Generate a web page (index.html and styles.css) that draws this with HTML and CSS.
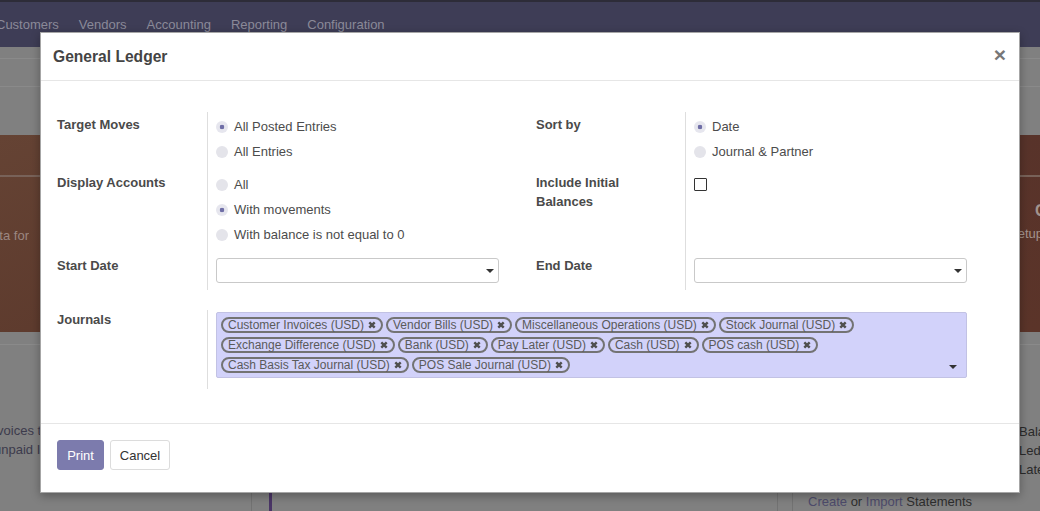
FILE: index.html
```html
<!DOCTYPE html>
<html lang="en">
<head>
<meta charset="utf-8">
<title>General Ledger</title>
<link rel="stylesheet" href="styles.css">
</head>
<body>
<div class="app">
  <nav class="topnav">
    <span class="nav-item first">Customers</span>
    <span class="nav-item">Vendors</span>
    <span class="nav-item">Accounting</span>
    <span class="nav-item">Reporting</span>
    <span class="nav-item">Configuration</span>
  </nav>
  <div class="cpanel">
    <div class="cp-row1"></div>
    <div class="cp-row2"></div>
  </div>
  <div class="banner">
    <div class="banner-rule"></div>
    <div class="banner-body">
      <div class="banner-left"><span class="banner-sub">Import data for</span></div>
      <div class="banner-right">
        <div class="banner-title">Company Data</div>
        <div class="banner-sub2">Setup your company</div>
      </div>
    </div>
  </div>
  <div class="dash">
    <div class="dash-top"></div>
    <div class="dash-cols">
      <div class="col col-a">
        <div class="clip">
          <div class="dim-text l1">invoices to customers</div>
          <div class="dim-text l2">unpaid Invoices</div>
        </div>
      </div>
      <div class="col col-b"><div class="purple-bar"></div></div>
      <div class="col col-c"></div>
      <div class="col col-d">
        <div class="stmt"><span class="lnk">Create</span> or <span class="lnk">Import</span> Statements</div>
      </div>
      <div class="col col-e">
        <div>Balance Sheet</div>
        <div>Ledger</div>
        <div>Late Payments</div>
      </div>
    </div>
  </div>
</div>

<div class="modal">
  <div class="modal-header">
    <h4 class="modal-title">General Ledger</h4>
    <span class="modal-close">&#215;</span>
  </div>
  <div class="modal-body">
    <div class="form-grid">
      <div class="f-label">Target Moves</div>
      <div class="f-value">
        <div class="radio"><span class="rdot checked"></span><span>All Posted Entries</span></div>
        <div class="radio"><span class="rdot"></span><span>All Entries</span></div>
      </div>
      <div class="f-label">Sort by</div>
      <div class="f-value right">
        <div class="radio"><span class="rdot checked"></span><span>Date</span></div>
        <div class="radio"><span class="rdot"></span><span>Journal &amp; Partner</span></div>
      </div>

      <div class="f-label">Display Accounts</div>
      <div class="f-value">
        <div class="radio"><span class="rdot"></span><span>All</span></div>
        <div class="radio"><span class="rdot checked"></span><span>With movements</span></div>
        <div class="radio"><span class="rdot"></span><span>With balance is not equal to 0</span></div>
      </div>
      <div class="f-label">Include Initial Balances</div>
      <div class="f-value right">
        <span class="checkbox"></span>
      </div>

      <div class="f-label">Start Date</div>
      <div class="f-value">
        <div class="select"><span class="caret"></span></div>
      </div>
      <div class="f-label">End Date</div>
      <div class="f-value right">
        <div class="select"><span class="caret"></span></div>
      </div>
    </div>

    <div class="journals-grid">
      <div class="f-label j-label">Journals</div>
      <div class="f-value j-value">
        <div class="tagbox">
          <span class="tag">Customer Invoices (USD)<svg class="x" viewBox="0 0 8 8"><path d="M1.3 1.3L6.7 6.7M6.7 1.3L1.3 6.7"/></svg></span>
          <span class="tag">Vendor Bills (USD)<svg class="x" viewBox="0 0 8 8"><path d="M1.3 1.3L6.7 6.7M6.7 1.3L1.3 6.7"/></svg></span>
          <span class="tag">Miscellaneous Operations (USD)<svg class="x" viewBox="0 0 8 8"><path d="M1.3 1.3L6.7 6.7M6.7 1.3L1.3 6.7"/></svg></span>
          <span class="tag">Stock Journal (USD)<svg class="x" viewBox="0 0 8 8"><path d="M1.3 1.3L6.7 6.7M6.7 1.3L1.3 6.7"/></svg></span>
          <span class="tag">Exchange Difference (USD)<svg class="x" viewBox="0 0 8 8"><path d="M1.3 1.3L6.7 6.7M6.7 1.3L1.3 6.7"/></svg></span>
          <span class="tag">Bank (USD)<svg class="x" viewBox="0 0 8 8"><path d="M1.3 1.3L6.7 6.7M6.7 1.3L1.3 6.7"/></svg></span>
          <span class="tag">Pay Later (USD)<svg class="x" viewBox="0 0 8 8"><path d="M1.3 1.3L6.7 6.7M6.7 1.3L1.3 6.7"/></svg></span>
          <span class="tag">Cash (USD)<svg class="x" viewBox="0 0 8 8"><path d="M1.3 1.3L6.7 6.7M6.7 1.3L1.3 6.7"/></svg></span>
          <span class="tag">POS cash (USD)<svg class="x" viewBox="0 0 8 8"><path d="M1.3 1.3L6.7 6.7M6.7 1.3L1.3 6.7"/></svg></span>
          <span class="tag">Cash Basis Tax Journal (USD)<svg class="x" viewBox="0 0 8 8"><path d="M1.3 1.3L6.7 6.7M6.7 1.3L1.3 6.7"/></svg></span>
          <span class="tag">POS Sale Journal (USD)<svg class="x" viewBox="0 0 8 8"><path d="M1.3 1.3L6.7 6.7M6.7 1.3L1.3 6.7"/></svg></span>
          <span class="caret box-caret"></span>
        </div>
      </div>
    </div>
  </div>
  <div class="modal-footer">
    <button class="btn btn-primary">Print</button>
    <button class="btn btn-secondary">Cancel</button>
  </div>
</div>
</body>
</html>
```
FILE: styles.css
```css
* { box-sizing: border-box; margin: 0; padding: 0; }
html, body { width: 1040px; height: 511px; overflow: hidden; }
body {
  font-family: "Liberation Sans", Arial, sans-serif;
  font-size: 13px;
  background: #808080;
  position: relative;
  color: #4c4c4c;
}

/* ---------- dimmed background page ---------- */
.app { width: 1040px; height: 511px; overflow: hidden; }
.topnav {
  height: 47px;
  background: #3e3d56;
  border-top: 2px solid #2d2c38;
  display: flex;
  align-items: center;
  gap: 20px;
  color: #8b8a99;
  font-size: 13px;
}
.nav-item.first { margin-left: -4px; }
.cpanel { height: 88px; }
.cp-row1 { height: 12px; border-bottom: 1px solid #8a8a8a; }
.cp-row2 { height: 28px; border-bottom: 1px solid #8a8a8a; }

.banner {
  height: 197px;
  background: linear-gradient(155deg, #654334 0%, #5d3a2d 35%, #58332a 70%, #5b3429 100%);
  display: flex;
  flex-direction: column;
}
.banner-rule { margin-top: 40px; height: 2px; background: #786259; }
.banner-body { flex: 1; display: flex; justify-content: space-between; }
.banner-left {
  width: 29px;
  display: flex;
  justify-content: flex-end;
  padding-top: 49px;
  white-space: nowrap;
  overflow: hidden;
}
.banner-sub { color: #9b8781; font-size: 13px; line-height: 19px; }
.banner-right {
  width: 30px;
  padding-top: 23px;
  white-space: nowrap;
  color: #a3938d;
  overflow: hidden;
}
.banner-title { margin-left: 25px; font-weight: bold; font-size: 16px; line-height: 22px; }
.banner-sub2 { margin-left: -1px; font-size: 13px; line-height: 19px; margin-top: 2px; }

.dash { height: 179px; display: flex; flex-direction: column; }
.dash-top { height: 14px; border-bottom: 1px solid #8a8a8a; }
.dash-cols { flex: 1; display: flex; }
.col { height: 100%; }
.col-a { width: 252px; border-right: 1px solid #727272; padding-top: 76px; }
.clip { width: 40px; overflow: hidden; }
.dim-text { color: #3c3b4c; font-size: 13px; line-height: 19px; white-space: nowrap; }
.l1 { margin-left: -13px; }
.l2 { margin-left: -6px; }
.col-b { width: 526px; border-right: 1px solid #727272; padding-left: 17px; }
.purple-bar { width: 3px; height: 100%; background: #4a3566; }
.col-c { width: 15px; border-right: 1px solid #727272; }
.col-d { width: 226px; padding-left: 15px; padding-top: 147px; }
.stmt { color: #2e2e2e; font-size: 13px; line-height: 19px; white-space: nowrap; }
.lnk { color: #4d4b6b; }
.col-e { flex: 1; padding-top: 77px; color: #2a2a2a; font-size: 13px; line-height: 19px; white-space: nowrap; overflow: hidden; }

/* ---------- modal ---------- */
.modal {
  position: absolute;
  left: 40px;
  top: 32px;
  width: 980px;
  height: 461px;
  background: #fff;
  border: 1px solid rgba(0, 0, 0, 0.35);
  box-shadow: 0 3px 9px rgba(0, 0, 0, 0.3);
  display: flex;
  flex-direction: column;
}
.modal-header {
  height: 48px;
  border-bottom: 1px solid #e6e6e6;
  display: flex;
  align-items: center;
  justify-content: space-between;
  padding: 0 13px 0 12px;
}
.modal-title { font-size: 15.6px; font-weight: bold; color: #444; line-height: 20px; }
.modal-close { font-size: 21px; font-weight: bold; color: #777; line-height: 20px; margin-top: -4px; }

.modal-body { flex: 1; padding: 31px 16px 0 16px; }

.form-grid {
  display: grid;
  grid-template-columns: 150px 329px 149px 318px;
}
.f-label {
  font-weight: bold;
  color: #4a4a4a;
  line-height: 19px;
  padding-top: 3px;
  padding-right: 30px;
}
.f-value {
  border-left: 1px solid #dedede;
  padding: 2px 37px 6px 8px;
}
.f-value.right { padding-right: 36px; }

.radio { display: flex; align-items: center; gap: 6px; height: 25px; line-height: 19px; color: #4c4c4c; }
.rdot {
  width: 12px;
  height: 12px;
  border-radius: 50%;
  background: #e4e4ea;
  flex: none;
}
.rdot.checked { background: radial-gradient(circle, #6f6ea6 0 2px, #e6e6ee 2.6px); }

.checkbox {
  display: block;
  width: 13px;
  height: 13px;
  margin-top: 6px;
  border: 1px solid #333;
  border-radius: 1px;
  background: #fff;
}

.select {
  margin: 3px 0 1px 0;
  height: 25px;
  border: 1px solid #c9c9c9;
  border-radius: 3px;
  background: #fff;
  display: flex;
  align-items: center;
  justify-content: flex-end;
  padding-right: 4px;
}
.caret {
  display: block;
  width: 0;
  height: 0;
  border-top: 4px solid #333;
  border-left: 4px solid transparent;
  border-right: 4px solid transparent;
}

.journals-grid {
  margin-top: 20px;
  display: grid;
  grid-template-columns: 150px 796px;
}
.j-label { padding-top: 0; }
.j-value { padding: 2px 36px 11px 8px; }
.tagbox {
  position: relative;
  background: #d2d2fa;
  border: 1px solid #c2c2e4;
  border-radius: 2px;
  padding: 4px 5px 4px 4px;
  display: flex;
  flex-wrap: wrap;
  gap: 4px 3px;
}
.tag {
  display: inline-flex;
  align-items: center;
  height: 16px;
  border: 2px solid #737373;
  border-radius: 8px;
  padding: 0 5px;
  font-size: 12px;
  line-height: 12px;
  color: #5a5a5a;
  white-space: nowrap;
  background: transparent;
}
.tag .x {
  width: 8px;
  height: 8px;
  margin-left: 4px;
  fill: none;
  stroke: #4f4f4f;
  stroke-width: 2.4;
  flex: none;
}
.box-caret { position: absolute; right: 9px; bottom: 8px; }

.modal-footer {
  height: 69px;
  border-top: 1px solid #e6e6e6;
  padding: 16px 16px;
  display: flex;
  align-items: flex-start;
  gap: 6px;
}
.btn {
  font-family: "Liberation Sans", Arial, sans-serif;
  font-size: 13px;
  height: 30px;
  border-radius: 3px;
  line-height: 28px;
  cursor: pointer;
  padding-top: 1px;
}
.btn-primary {
  width: 47px;
  background: #7c7bad;
  border: 1px solid #7c7bad;
  color: #fff;
}
.btn-secondary {
  width: 60px;
  background: #fff;
  border: 1px solid #dcdcdc;
  color: #333;
}
```
